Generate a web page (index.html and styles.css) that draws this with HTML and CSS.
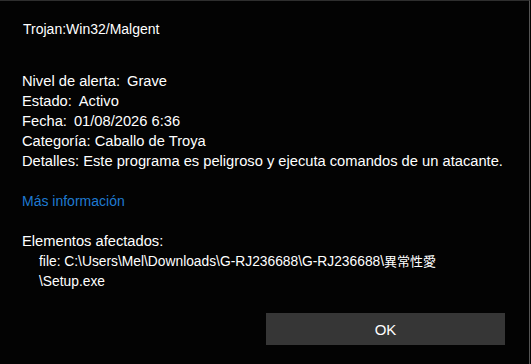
FILE: index.html
```html
<!DOCTYPE html>
<html lang="es">
<head>
<meta charset="utf-8">
<title>Trojan:Win32/Malgent</title>
<link rel="stylesheet" href="styles.css">
</head>
<body>
<div class="dialog">
  <div class="title">Trojan:Win32/Malgent</div>
  <div class="details">
    <div class="row">Nivel de alerta:<span class="gap"></span>Grave</div>
    <div class="row">Estado:<span class="gap"></span>Activo</div>
    <div class="row">Fecha:<span class="gap"></span>01/08/2026 6:36</div>
    <div class="row">Categoría: Caballo de Troya</div>
    <div class="row">Detalles: Este programa es peligroso y ejecuta comandos de un atacante.</div>
  </div>
  <a class="more" href="#">Más información</a>
  <div class="affected">
    <div class="row">Elementos afectados:</div>
    <div class="file">file: C:\Users\Mel\Downloads\G-RJ236688\G-RJ236688\<span class="cjk">異常性愛</span><br>\Setup.exe</div>
  </div>
  <div class="actions">
    <button class="ok" type="button">OK</button>
  </div>
</div>
</body>
</html>
```
FILE: styles.css
```css
html, body {
  margin: 0;
  padding: 0;
  background: #030303;
}
body {
  width: 531px;
  height: 364px;
  overflow: hidden;
  font-family: "Liberation Sans", "Noto Sans CJK JP", sans-serif;
  font-size: 14.7px;
  line-height: 20px;
  color: #ffffff;
}
.dialog {
  box-sizing: border-box;
  width: 530px;
  height: 364px;
  border-top: 1px solid #2e2e2e;
  border-right: 1px solid #555555;
  padding: 18px 0 0 22px;
  display: flex;
  flex-direction: column;
}
.title {
  padding-left: 1px;
  font-size: 14px;
}
.details {
  margin-top: 32px;
}
.gap {
  display: inline-block;
  width: 7px;
}
.more {
  margin-top: 20px;
  color: #1f7ad1;
  text-decoration: none;
  align-self: flex-start;
  font-size: 14px;
}
.affected {
  margin-top: 20px;
}
.file {
  padding-left: 17px;
  font-size: 13.8px;
}
.cjk {
  font-family: "Noto Sans CJK JP", sans-serif;
  font-size: 13px;
}
.actions {
  display: flex;
  justify-content: flex-end;
  margin-top: 21px;
  padding-right: 24px;
}
.ok {
  width: 239px;
  height: 32px;
  border: none;
  background: #363636;
  color: #ffffff;
  font-family: inherit;
  font-size: 15px;
  padding: 0;
}
```
